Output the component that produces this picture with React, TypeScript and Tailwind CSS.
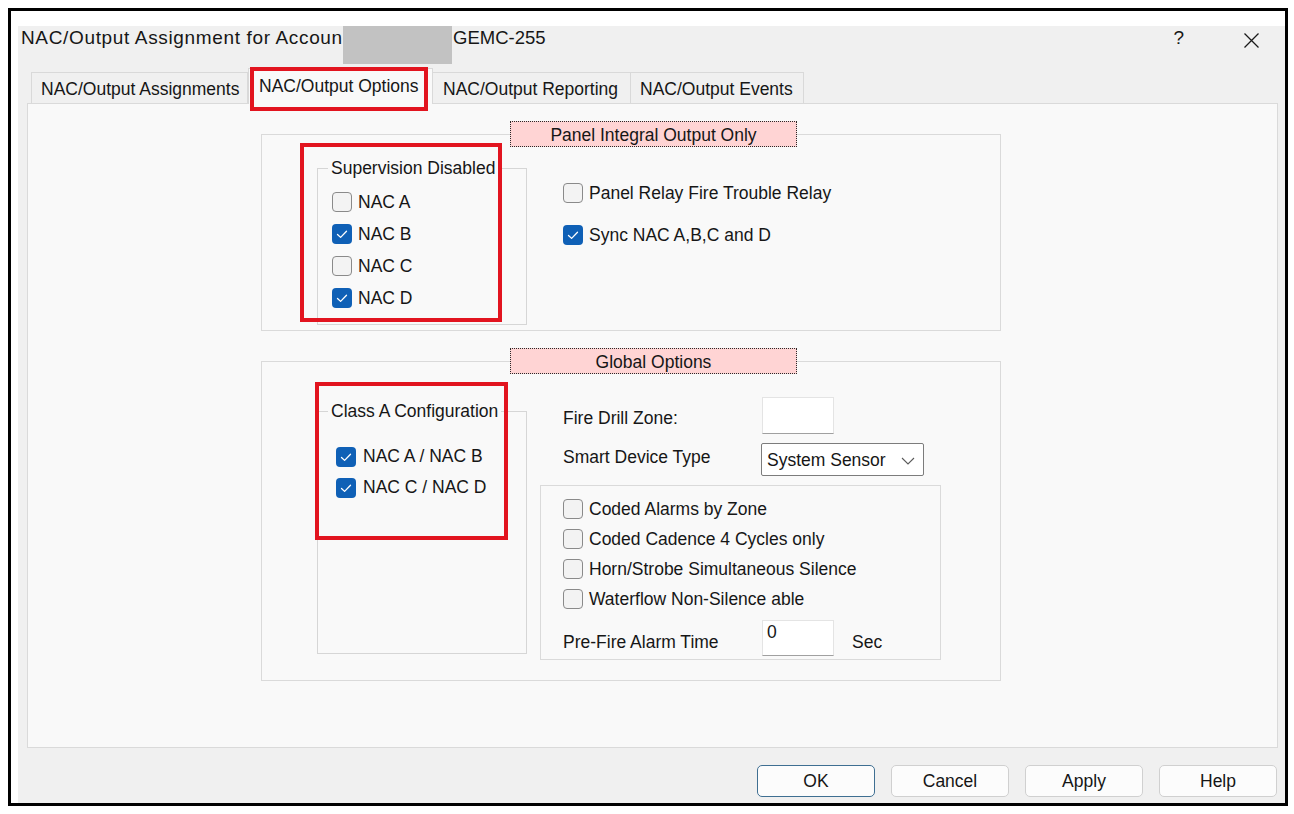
import React from "react";

const FONT = { fontFamily: "'Liberation Sans', Arial, sans-serif" };

function CheckBox({ checked }: { checked: boolean }) {
  if (checked) {
    return (
      <span className="flex h-[20px] w-[20px] shrink-0 items-center justify-center rounded-[4px] bg-[#0f60b6]">
        <svg width="20" height="20" viewBox="0 0 20 20" fill="none">
          <path d="M5.5 10.5 L8.6 13.4 L14.5 7.2" stroke="#ffffff" strokeWidth="1.3" strokeLinecap="round" strokeLinejoin="round" />
        </svg>
      </span>
    );
  }
  return <span className="h-[20px] w-[20px] shrink-0 rounded-[4px] border border-[#8a8a8a] bg-[#f3f3f3]" />;
}

function CheckRow({ label, checked, h, gap }: { label: string; checked: boolean; h: string; gap: string }) {
  return (
    <div className={`flex items-center ${h} ${gap}`}>
      <CheckBox checked={checked} />
      <span className="whitespace-nowrap">{label}</span>
    </div>
  );
}

function Highlight({ className }: { className: string }) {
  return <div className={`pointer-events-none absolute border-[4px] border-[#e2141f] ${className}`} />;
}

function GroupLegend({ children }: { children: React.ReactNode }) {
  return (
    <legend className="ml-[248px] p-0">
      <div className="h-[26px] w-[287px] border border-dotted border-[#2a2a2a] bg-[#ffd4d4] text-center leading-[26px]">
        {children}
      </div>
    </legend>
  );
}

export default function App() {
  return (
    <div className="h-[814px] w-[1294px] bg-white pl-[8px] pt-[8px] text-[17.5px] text-[#161616]" style={FONT}>
      <div className="h-[798px] w-[1280px] border-[3px] border-black bg-white pl-[7px] pt-[15px]">
        <div className="flex h-[777px] w-[1267px] flex-col bg-[#f0f0f0]">
          {/* title bar */}
          <div className="flex h-[42px] items-start pl-[3px]">
            <span className="w-[322px] overflow-hidden whitespace-nowrap text-[19px] leading-[24px] tracking-[0.65px]">NAC/Output Assignment for Accoun</span>
            <div className="h-[38px] w-[109px] bg-[#c2c2c2]" />
            <span className="ml-[1px] text-[18.5px] leading-[24px]">GEMC-255</span>
            <div className="ml-auto mr-[26px] flex items-center">
              <span className="text-[19px] leading-[24px]">?</span>
              <svg className="ml-[60px] mt-[5px]" width="15" height="15" viewBox="0 0 15 15">
                <path d="M0.5 0.5 L14.5 14.5 M14.5 0.5 L0.5 14.5" stroke="#1a1a1a" strokeWidth="1.3" />
              </svg>
            </div>
          </div>

          {/* tab strip */}
          <div className="relative z-10 flex h-[35px] items-end pl-[13px]">
            <div className="flex h-[31px] w-[217px] items-center border border-b-0 border-[#d9d9d9] bg-[#f0f0f0] pl-[9px] pt-[2px]">
              NAC/Output Assignments
            </div>
            <div className="relative -mb-[1px] flex h-[36px] w-[185px] items-center border border-b-0 border-[#d9d9d9] bg-[#f9f9f9] pl-[10px]">
              NAC/Output Options
              <Highlight className="left-[1px] top-[-2px] h-[44px] w-[178px]" />
            </div>
            <div className="flex h-[31px] w-[198px] items-center border border-b-0 border-l-0 border-[#d9d9d9] bg-[#f0f0f0] pl-[10px] pt-[2px]">
              NAC/Output Reporting
            </div>
            <div className="flex h-[31px] w-[173px] items-center border border-b-0 border-l-0 border-[#d9d9d9] bg-[#f0f0f0] pl-[9px] pt-[2px]">
              NAC/Output Events
            </div>
          </div>

          {/* tab page */}
          <div className="ml-[9px] h-[645px] w-[1251px] border border-[#dadada] bg-[#f9f9f9] pl-[233px] pt-[17px]">
            {/* Panel Integral Output Only */}
            <fieldset className="w-[740px] border border-[#dadada] pb-[5px]">
              <GroupLegend>Panel Integral Output Only</GroupLegend>
              <div className="flex items-start pl-[55px]">
                <div className="relative mt-[11px] w-[210px]">
                  <fieldset className="border border-[#d6d6d6] pb-[10px] pl-[14px] pt-[8px]">
                    <legend className="ml-[-4px] h-[20px] px-[3px] leading-[20px]">Supervision Disabled</legend>
                    <CheckRow label="NAC A" checked={false} h="h-[32px]" gap="gap-[6px]" />
                    <CheckRow label="NAC B" checked h="h-[32px]" gap="gap-[6px]" />
                    <CheckRow label="NAC C" checked={false} h="h-[32px]" gap="gap-[6px]" />
                    <CheckRow label="NAC D" checked h="h-[32px]" gap="gap-[6px]" />
                  </fieldset>
                  <Highlight className="left-[-17px] top-[-15px] h-[179px] w-[202px]" />
                </div>
                <div className="ml-[36px] mt-[30px] flex flex-col gap-[10px]">
                  <CheckRow label="Panel Relay Fire Trouble Relay" checked={false} h="h-[32px]" gap="gap-[6px]" />
                  <CheckRow label="Sync NAC A,B,C and D" checked h="h-[32px]" gap="gap-[6px]" />
                </div>
              </div>
            </fieldset>

            {/* Global Options */}
            <fieldset className="mt-[17px] w-[740px] border border-[#dadada] pb-[20px]">
              <GroupLegend>Global Options</GroupLegend>
              <div className="flex items-start pl-[55px]">
                <div className="relative mt-[27px] w-[210px]">
                  <fieldset className="border border-[#d6d6d6]">
                    <legend className="ml-[10px] h-[20px] px-[3px] leading-[20px]">Class A Configuration</legend>
                    <div className="h-[232px] pl-[18px] pt-[20px]">
                      <CheckRow label="NAC A / NAC B" checked h="h-[31px]" gap="gap-[7px]" />
                      <CheckRow label="NAC C / NAC D" checked h="h-[31px]" gap="gap-[7px]" />
                    </div>
                  </fieldset>
                  <Highlight className="left-[-2px] top-[-19px] h-[158px] w-[193px]" />
                </div>

                <div className="ml-[13px] mt-[23px] w-[401px]">
                  <div className="flex h-[37px] items-center pl-[23px]">
                    <span className="mt-[5px] w-[199px]">Fire Drill Zone:</span>
                    <div className="h-[37px] w-[72px] border border-[#e4e4e4] border-b-[#a0a0a0] bg-white" />
                  </div>
                  <div className="mt-[9px] flex h-[33px] items-start pl-[23px]">
                    <span className="mt-[2px] w-[198px] leading-[24px]">Smart Device Type</span>
                    <div className="flex h-[33px] w-[163px] items-center justify-between rounded-[2px] border border-[#7c7c7c] bg-white pl-[5px] pr-[8px] pt-[1px]">
                      <span>System Sensor</span>
                      <svg width="14" height="8" viewBox="0 0 14 8" fill="none" className="mt-[2px]">
                        <path d="M1 1 L7 7 L13 1" stroke="#5a5a5a" strokeWidth="1.1" />
                      </svg>
                    </div>
                  </div>
                  <div className="mt-[9px] border border-[#dadada] pb-[3px] pl-[22px] pt-[8px]">
                    <CheckRow label="Coded Alarms by Zone" checked={false} h="h-[30px]" gap="gap-[6px]" />
                    <CheckRow label="Coded Cadence 4 Cycles only" checked={false} h="h-[30px]" gap="gap-[6px]" />
                    <CheckRow label="Horn/Strobe Simultaneous Silence" checked={false} h="h-[30px]" gap="gap-[6px]" />
                    <CheckRow label="Waterflow Non-Silence able" checked={false} h="h-[30px]" gap="gap-[6px]" />
                    <div className="mt-[6px] flex h-[36px] items-center">
                      <span className="mt-[8px] w-[199px]">Pre-Fire Alarm Time</span>
                      <div className="h-[36px] w-[72px] border border-[#e4e4e4] border-b-[#a0a0a0] bg-white pl-[4px] leading-[22px]">0</div>
                      <span className="ml-[18px] mt-[8px]">Sec</span>
                    </div>
                  </div>
                </div>
              </div>
            </fieldset>
          </div>

          {/* dialog buttons */}
          <div className="flex flex-1 items-start justify-end gap-[16px] pr-[8px] pt-[17px]">
            <button className="h-[32px] w-[118px] rounded-[5px] border border-[#3f6f92] bg-[#fcfcfc]">OK</button>
            <button className="h-[32px] w-[118px] rounded-[5px] border border-[#d0d0d0] bg-[#fcfcfc]">Cancel</button>
            <button className="h-[32px] w-[118px] rounded-[5px] border border-[#d0d0d0] bg-[#fcfcfc]">Apply</button>
            <button className="h-[32px] w-[118px] rounded-[5px] border border-[#d0d0d0] bg-[#fcfcfc]">Help</button>
          </div>
        </div>
      </div>
    </div>
  );
}
